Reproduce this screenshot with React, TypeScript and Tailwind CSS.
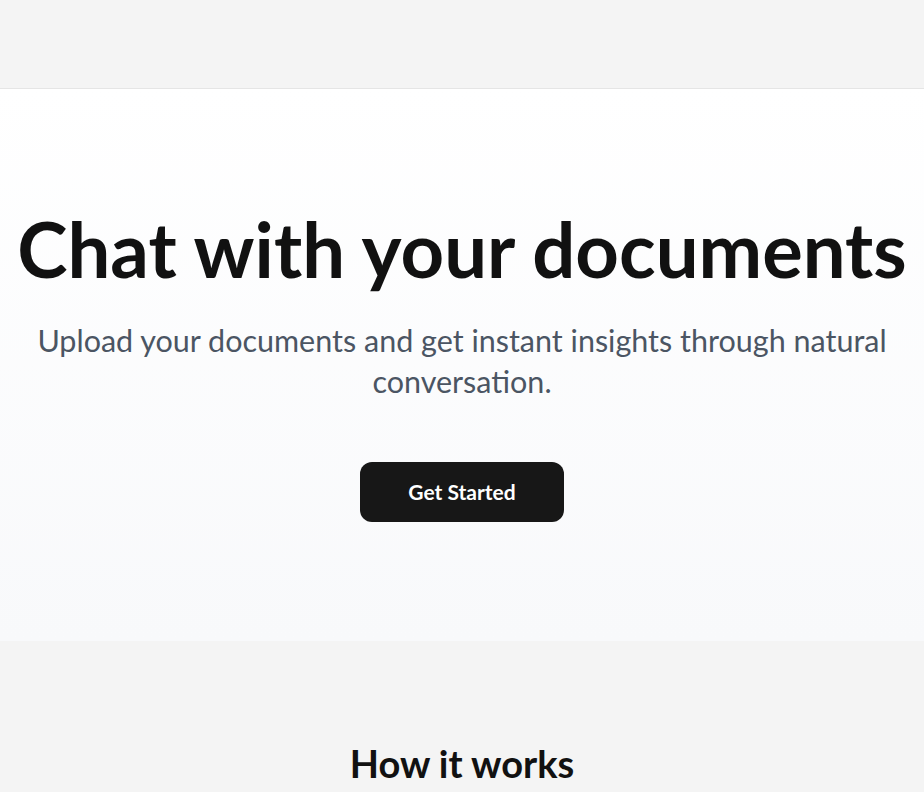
export default function App() {
  return (
    <div className="min-h-screen bg-[#f4f4f4] font-['Lato',sans-serif] text-[#111111]">
      <header className="h-[89px] border-b border-[#e5e5e5] bg-[#f4f4f4]" />

      <section className="flex flex-col items-center bg-gradient-to-b from-white to-[#f8f9fb] px-4 pt-[122px] pb-[119px] text-center">
        <h1 className="whitespace-nowrap text-[76px] font-bold leading-none">Chat with your documents</h1>
        <p className="mt-[33px] max-w-[880px] text-[30.5px] leading-[41px] text-[#4b5563]">
          Upload your documents and get instant insights through natural conversation.
        </p>
        <button className="mt-[60px] rounded-xl bg-[#171717] px-[48px] py-[14px] text-[21px] font-bold text-white">
          Get Started
        </button>
      </section>

      <section className="flex flex-col items-center pt-[102px] pb-20">
        <h2 className="text-[38px] font-bold leading-10">How it works</h2>
      </section>
    </div>
  )
}
